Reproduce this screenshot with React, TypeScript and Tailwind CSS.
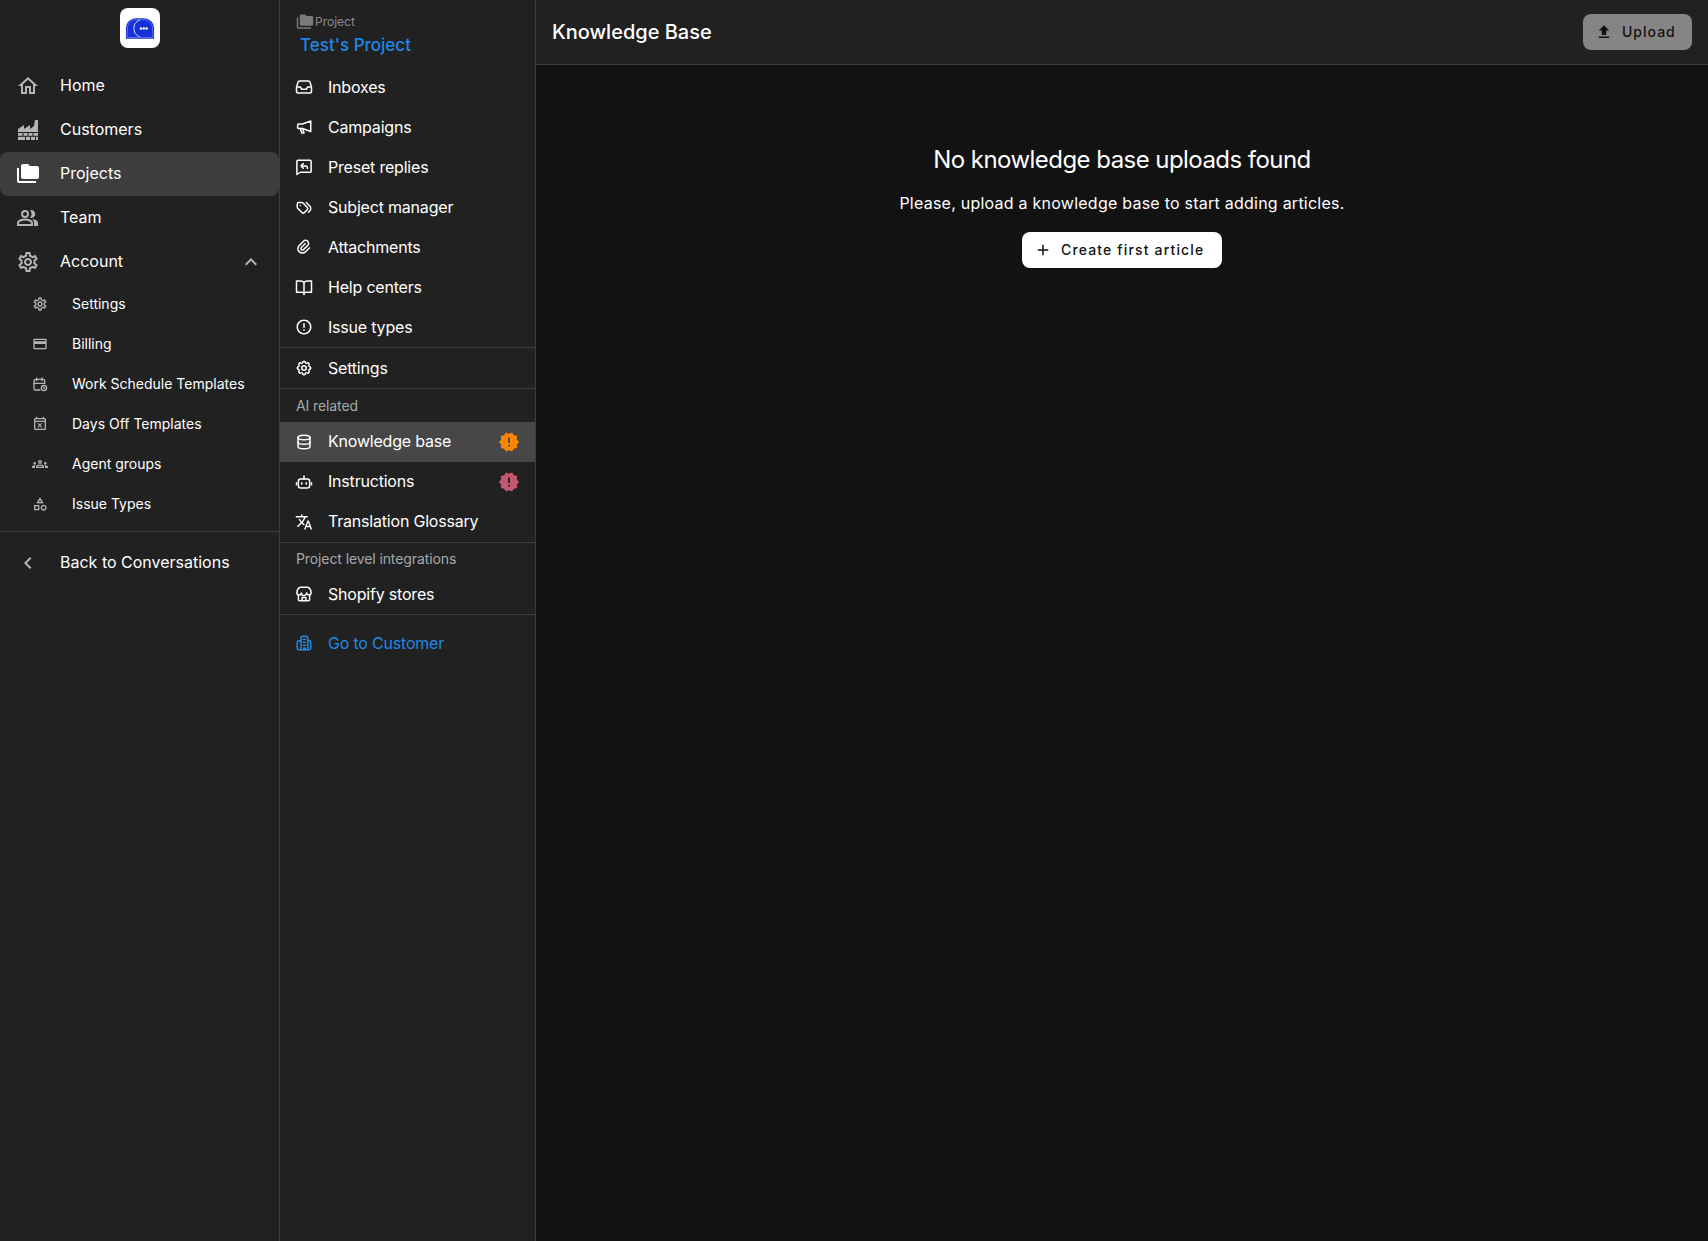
import React from "react";
import {
  MdOutlineHome, MdFolderCopy, MdOutlineSettings, MdKeyboardArrowUp, MdKeyboardArrowLeft,
  MdOutlineCreditCard, MdOutlineGroups, MdOutlineCategory, MdNewReleases, MdFileUpload, MdAdd, MdOutlineTranslate, MdOutlineEventBusy,
} from "react-icons/md";
import { TbTags, TbSettings, TbDatabase, TbCalendarTime } from "react-icons/tb";
import { RiAttachment2, RiErrorWarningLine } from "react-icons/ri";

const font = "font-['Inter','Liberation_Sans',sans-serif]";

type P = { className?: string };
const S = ({ className, children }: P & { children: React.ReactNode }) => (
  <svg viewBox="0 0 24 24" fill="none" stroke="currentColor" strokeWidth="2" strokeLinecap="round" strokeLinejoin="round" className={className}>
    {children}
  </svg>
);

const FactoryIcon = ({ className }: P) => (
  <svg viewBox="0 0 24 24" className={className} fill="currentColor">
    <path d="M2 22V11l6-4v4l6-4v4l4-3 1-6h3v20H2Z" />
    <path d="M2 14.500h20M2 18.300h20M7 14.500v3.800M12 14.500v3.800M17 14.500v3.800M9.500 18.300V22M14.500 18.300V22M19.500 18.300V22" stroke="#212121" strokeWidth="1" />
  </svg>
);
const TeamIcon = ({ className }: P) => (
  <svg viewBox="0 0 24 24" className={className}>
    <circle cx="9" cy="8" r="3" fill="none" stroke="currentColor" strokeWidth="2" />
    <path d="M2 19v-2c0-2 3.500-3.500 7-3.500s7 1.500 7 3.500v2H2Z" fill="none" stroke="currentColor" strokeWidth="2" />
    <path d="M14 4.200a4 4 0 1 1 0 7.600c1-1 1.500-2.300 1.500-3.800S15 5.200 14 4.200ZM16 13c3 .3 6 1.500 6 4v3h-4v-3c0-1.600-.8-3-2-4Z" fill="currentColor" />
  </svg>
);
const InboxIcon = ({ className }: P) => (
  <S className={className}>
    <path d="M6 4h12a2 2 0 0 1 2 1.500l2 7V18a2 2 0 0 1-2 2H4a2 2 0 0 1-2-2v-5.500l2-7A2 2 0 0 1 6 4Z" />
    <path d="M2.500 12H7l2 3h6l2-3h4.500" />
  </S>
);
const MegaphoneIcon = ({ className }: P) => (
  <S className={className}>
    <path d="M21 4 10 8H5a1.500 1.500 0 0 0-1.500 1.500v3A1.500 1.500 0 0 0 5 14h5l11 4V4Z" />
    <path d="m7 14 2 6h3l-2-6" />
  </S>
);
const ReplyIcon = ({ className }: P) => (
  <S className={className}>
    <path d="M4 3h16a1.500 1.500 0 0 1 1.500 1.500v13A1.500 1.500 0 0 1 20 19H7l-4.500 3V4.500A1.500 1.500 0 0 1 4 3Z" />
    <path d="M11 7.500 8 10.500l3 3M8 10.500h6.500a2 2 0 0 1 2 2V14" />
  </S>
);
const BookIcon = ({ className }: P) => (
  <S className={className}>
    <path d="M12 6c-1-1.200-2-2-4-2H2v15h7c1.500 0 3 .5 3 1.500 0-1 1.500-1.500 3-1.500h7V4h-6c-2 0-3 .8-4 2Z" />
    <path d="M12 6v16" />
  </S>
);
const RobotIcon = ({ className }: P) => (
  <S className={className}>
    <rect x="4.500" y="8" width="15" height="12" rx="3" />
    <path d="M12 4v4M2 13v2.500M22 13v2.500M9 13v1.500M15 13v1.500" />
  </S>
);
const StoreIcon = ({ className }: P) => (
  <S className={className}>
    <path d="M8 3h8c3 0 5 3 5.500 7a3 3 0 0 1-6 .5 3.500 3.500 0 0 1-7 0 3 3 0 0 1-6-.5C3 6 5 3 8 3Z" />
    <path d="M4.500 13.500V19a2 2 0 0 0 2 2h11a2 2 0 0 0 2-2v-5.500M9.500 21v-4.500h5V21" />
  </S>
);
const CustomerIcon = ({ className }: P) => (
  <S className={className}>
    <path d="M8 21V5a2 2 0 0 1 2-2h5a2 2 0 0 1 2 2v16M8 9H5a2 2 0 0 0-2 2v8a2 2 0 0 0 2 2h14a2 2 0 0 0 2-2v-8a2 2 0 0 0-2-2h-2" />
    <path d="M11 7h3M11 11h3M11 15h3M11.500 21v-2.500h2V21" />
  </S>
);
const ScheduleIcon = ({ className }: P) => <TbCalendarTime className={className} />;

function MainRow({ icon: Icon, label, active, right }: { icon: any; label: string; active?: boolean; right?: React.ReactNode }) {
  return (
    <div className={`flex h-11 items-center rounded-lg pl-4 pr-5 ${active ? "bg-[#3d3d3d]" : ""}`}>
      <Icon className={`h-6 w-6 shrink-0 ${active ? "text-white" : "text-[#b4b4b4]"}`} />
      <span className="ml-5 grow pb-0.5 text-base text-white">{label}</span>
      {right}
    </div>
  );
}

function SubRow({ icon: Icon, label }: { icon: any; label: string }) {
  return (
    <div className="flex h-10 items-center pl-8">
      <Icon className="h-4 w-4 shrink-0 text-[#b4b4b4]" />
      <span className="ml-6 text-sm text-white">{label}</span>
    </div>
  );
}

function Row({ icon: Icon, label, active, badge, lift }: { icon: any; label: string; active?: boolean; badge?: string; lift?: boolean }) {
  return (
    <div className={`flex h-10 items-center pl-[15px] pr-[15px] ${active ? "bg-[#474747]" : ""}`}>
      <Icon className="h-[18px] w-[18px] shrink-0 text-white" />
      <span className={`ml-[15px] grow text-base tracking-[-0.2px] text-white ${lift ? "pb-0.5" : ""}`}>{label}</span>
      {badge && <MdNewReleases className={`h-[22px] w-[22px] ${badge}`} />}
    </div>
  );
}

function Logo() {
  return (
    <div className="flex h-10 w-10 items-center justify-center rounded-lg bg-white">
      <svg viewBox="0 0 32 24" className="h-[23px] w-[30px]">
        <path d="M1 23V12C1 5.500 6 1 12 1h8c6 0 11 4.500 11 11v11H1Z" fill="#1532d8" />
        <path d="M2.500 21.500V12C2.500 6.500 7 2.500 12 2.500h8c5 0 9.500 4 9.500 9.500v9.500H2.500Z" fill="none" stroke="#9fb0ff" strokeWidth="0.5" />
        <path d="M16 3C11 4.500 9.500 8.500 9.500 12s2 7.500 6.500 9" fill="none" stroke="#fff" strokeWidth="0.9" />
        <circle cx="17" cy="12" r="1.300" fill="#fff" />
        <circle cx="20" cy="12" r="1.300" fill="#fff" />
        <circle cx="23" cy="12" r="1.300" fill="#fff" />
      </svg>
    </div>
  );
}

export default function App() {
  return (
    <div className={`${font} flex h-[1241px] w-[1708px] overflow-hidden bg-[#121212] text-white`}>
      <aside className="flex w-[280px] shrink-0 flex-col border-r border-[#3d3d3d] bg-[#212121]">
        <div className="flex justify-center pb-4 pt-2">
          <Logo />
        </div>
        <MainRow icon={MdOutlineHome} label="Home" />
        <MainRow icon={FactoryIcon} label="Customers" />
        <MainRow icon={MdFolderCopy} label="Projects" active />
        <MainRow icon={TeamIcon} label="Team" />
        <MainRow icon={MdOutlineSettings} label="Account" right={<MdKeyboardArrowUp className="-mr-[4px] h-6 w-6 text-[#b4b4b4]" />} />
        <SubRow icon={MdOutlineSettings} label="Settings" />
        <SubRow icon={MdOutlineCreditCard} label="Billing" />
        <SubRow icon={ScheduleIcon} label="Work Schedule Templates" />
        <SubRow icon={MdOutlineEventBusy} label="Days Off Templates" />
        <SubRow icon={MdOutlineGroups} label="Agent groups" />
        <SubRow icon={MdOutlineCategory} label="Issue Types" />
        <div className="mt-[7px] border-t border-[#3d3d3d] pt-[9px]">
          <MainRow icon={MdKeyboardArrowLeft} label="Back to Conversations" />
        </div>
      </aside>

      <aside className="flex w-[256px] shrink-0 flex-col border-r border-[#3d3d3d] bg-[#212121]">
        <div className="h-[67px] pl-4 pt-[13px]">
          <div className="flex items-center text-xs text-[#8a8a8a]">
            <MdFolderCopy className="h-[18px] w-[18px] text-[#7a7a7a]" />
            <span className="ml-px">Project</span>
          </div>
          <div className="ml-1 mt-[2px] text-[17px] font-medium leading-6 text-[#1e88e5]">Test's Project</div>
        </div>
        <Row icon={InboxIcon} label="Inboxes" />
        <Row icon={MegaphoneIcon} label="Campaigns" />
        <Row icon={ReplyIcon} label="Preset replies" />
        <Row icon={TbTags} label="Subject manager" />
        <Row icon={RiAttachment2} label="Attachments" />
        <Row icon={BookIcon} label="Help centers" />
        <Row icon={RiErrorWarningLine} label="Issue types" />
        <div className="border-y border-[#3d3d3d]">
          <Row icon={TbSettings} label="Settings" />
        </div>
        <div className="flex h-[33px] items-center pl-4 text-sm tracking-[-0.1px] text-[#a8a8a8]">AI related</div>
        <Row icon={TbDatabase} label="Knowledge base" active badge="text-[#f98500]" lift />
        <Row icon={RobotIcon} label="Instructions" badge="text-[#c5566f]" lift />
        <Row icon={MdOutlineTranslate} label="Translation Glossary" lift />
        <div className="flex h-8 items-center border-t border-[#3d3d3d] pl-4 text-sm tracking-[-0.1px] text-[#a8a8a8]">Project level integrations</div>
        <Row icon={StoreIcon} label="Shopify stores" />
        <div className="border-t border-[#3d3d3d] pt-2">
          <div className="flex h-10 items-center pl-[15px]">
            <CustomerIcon className="h-[18px] w-[18px] text-[#1e88e5]" />
            <span className="ml-[15px] text-base tracking-[-0.2px] text-[#1e88e5]">Go to Customer</span>
          </div>
        </div>
      </aside>

      <main className="flex min-w-0 grow flex-col">
        <header className="flex h-[65px] shrink-0 items-center justify-between border-b border-[#3d3d3d] bg-[#212121] pl-4 pr-4">
          <h1 className="text-xl font-medium">Knowledge Base</h1>
          <button className="flex h-9 w-[109px] items-center gap-[9px] rounded-lg bg-[#858585] pl-3 text-sm font-medium tracking-[1px] text-[#121212]">
            <MdFileUpload className="h-[18px] w-[18px]" />
            Upload
          </button>
        </header>
        <div className="flex flex-col items-center pt-[77px]">
          <h2 className="text-2xl font-normal leading-9 tracking-[-0.55px]">No knowledge base uploads found</h2>
          <p className="mt-[13px] text-base tracking-[0.24px]">Please, upload a knowledge base to start adding articles.</p>
          <button className="mt-[17px] flex h-9 w-[200px] items-center gap-[9px] rounded-lg bg-white pl-3 text-sm font-medium tracking-[1.15px] text-[#121212]">
            <MdAdd className="h-[18px] w-[18px]" />
            Create first article
          </button>
        </div>
      </main>
    </div>
  );
}
